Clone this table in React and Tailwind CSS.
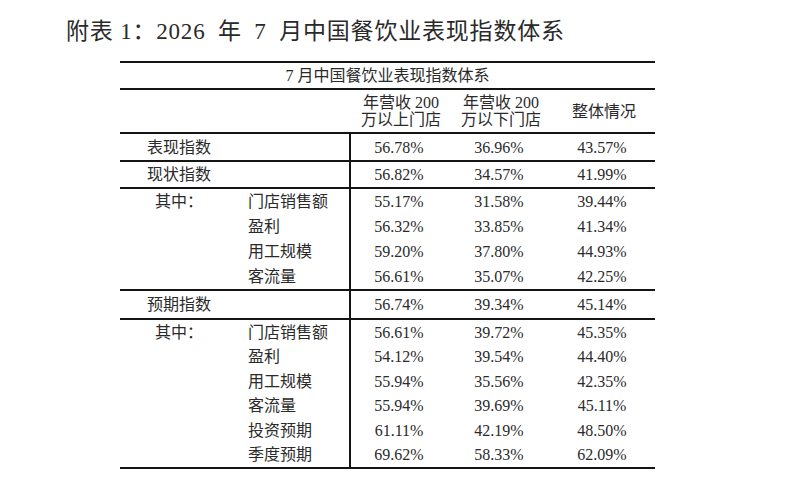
const groupA = [
  ['门店销售额', '55.17%', '31.58%', '39.44%'],
  ['盈利', '56.32%', '33.85%', '41.34%'],
  ['用工规模', '59.20%', '37.80%', '44.93%'],
  ['客流量', '56.61%', '35.07%', '42.25%'],
];

const groupB = [
  ['门店销售额', '56.61%', '39.72%', '45.35%'],
  ['盈利', '54.12%', '39.54%', '44.40%'],
  ['用工规模', '55.94%', '35.56%', '42.35%'],
  ['客流量', '55.94%', '39.69%', '45.11%'],
  ['投资预期', '61.11%', '42.19%', '48.50%'],
  ['季度预期', '69.62%', '58.33%', '62.09%'],
];

const Values = ({ vals }) => (
  <div className="grid grid-cols-[96px_104px_102px] items-center text-center">
    {vals.map((v, i) => (
      <span key={i}>{v}</span>
    ))}
  </div>
);

const MainRow = ({ label, vals, h }) => (
  <div className={`flex border-t-2 border-[#151515] ${h}`}>
    <div className="w-[231px] border-r-2 border-[#151515] pl-[27px] flex items-center">{label}</div>
    <Values vals={vals} />
  </div>
);

const Group = ({ rows, rowH }) => (
  <div className="flex border-t-2 border-[#151515]">
    <div className="w-[231px] border-r-2 border-[#151515] flex flex-col">
      {rows.map((r, i) => (
        <div key={r[0]} className={`flex items-center ${rowH}`}>
          <span className="w-[128px] pl-[35px]">{i === 0 ? '其中：' : ''}</span>
          <span>{r[0]}</span>
        </div>
      ))}
    </div>
    <div className="flex flex-col">
      {rows.map((r) => (
        <div key={r[0]} className={`flex items-center ${rowH}`}>
          <Values vals={r.slice(1)} />
        </div>
      ))}
    </div>
  </div>
);

export default function App() {
  return (
    <div
      className="w-[800px] h-[495px] bg-white text-[#2a2a2a] overflow-hidden"
      style={{ fontFamily: '"Liberation Serif", "Noto Sans CJK SC", serif' }}
    >
      <h1 className="pt-[18px] pl-[66px] text-[23px] leading-[28px] font-normal tracking-[0.8px] [word-spacing:6px]">
        <span className="[word-spacing:0px]">附表 1：</span>2026 年 7 月中国餐饮业表现指数体系
      </h1>

      <div className="ml-[120px] mt-[15px] w-[535px] text-[16px] leading-[17px] border-b-2 border-[#151515]">
        <div className="border-t-2 border-[#151515] h-[27px] flex items-center justify-center">
          7 月中国餐饮业表现指数体系
        </div>
        <div className="border-t-2 border-[#151515] h-[44px] flex items-center">
          <div className="w-[233px]" />
          <div className="grid grid-cols-[96px_104px_102px] items-center text-center">
            <span>
              年营收 200
              <br />
              万以上门店
            </span>
            <span>
              年营收 200
              <br />
              万以下门店
            </span>
            <span>整体情况</span>
          </div>
        </div>
        <MainRow label="表现指数" vals={['56.78%', '36.96%', '43.57%']} h="h-[28px]" />
        <MainRow label="现状指数" vals={['56.82%', '34.57%', '41.99%']} h="h-[27px]" />
        <Group rows={groupA} rowH="h-[25px]" />
        <MainRow label="预期指数" vals={['56.74%', '39.34%', '45.14%']} h="h-[29px]" />
        <Group rows={groupB} rowH="h-[24.5px]" />
      </div>
    </div>
  );
}
